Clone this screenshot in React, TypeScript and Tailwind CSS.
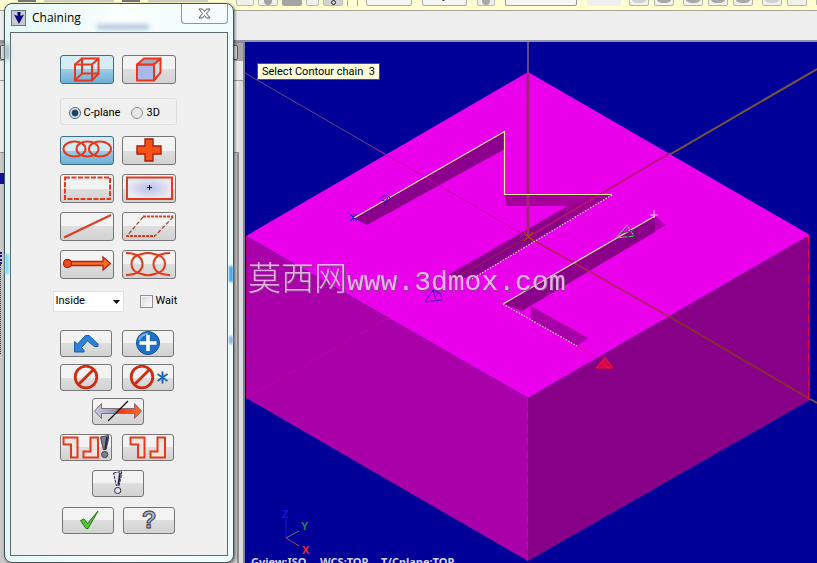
import type { ReactNode } from 'react';
import clsx from 'clsx';

const RED = '#e8381b';

type ToolButtonProps = {
  label: string;
  children: ReactNode;
  active?: boolean;
  small?: boolean;
};

const ToolButton = ({ label, children, active, small }: ToolButtonProps) => (
  <button
    type="button"
    aria-label={label}
    aria-pressed={active}
    className={clsx(
      'shrink-0 overflow-hidden rounded-[3px] border bg-linear-to-b',
      small ? 'h-[27px] w-[52px]' : 'h-[29px] w-[54px]',
      active
        ? 'border-[#3c6f8f] from-[#d5ebf6] from-50% via-[#9bcbe6] via-50% to-[#6cb0d6]'
        : 'border-[#777] from-[#f3f3f3] from-50% via-[#dedede] via-50% to-[#d2d2d2]'
    )}
  >
    <svg viewBox={small ? '1 1 50 25' : '1 1 52 27'} className="block h-full w-full" fill="none">
      {children}
    </svg>
  </button>
);

const Exclamation = ({ x, solid }: { x: number; solid?: boolean }) => (
  <g transform={`translate(${x} 0)`} stroke={solid ? '#3b3f4c' : '#26264d'} fill={solid ? '#7c8191' : '#e4e4f2'}>
    <path d="M0 3 L8 1.5 L8 5 L5.5 15.5 L2.8 15.5 Z" strokeDasharray={solid ? undefined : '3 1'} />
    <path d="M6.5 3 L4.8 15" stroke="#26264d" strokeWidth="1.8" />
    <circle cx="4.2" cy="20.5" r="3.1" />
  </g>
);

const Hooks = ({ x }: { x: number }) => (
  <g stroke={RED} strokeWidth="2" fill="#f6e4e0">
    <path d={`M${x} 3.5 h14 v20 h-6.5 v-13 h-7.5 z`} />
    <path d={`M${x + 27} 3.5 h7.5 v20 h-14.5 v-6 h7 z`} />
  </g>
);

const Forbidden = ({ cx }: { cx: number }) => (
  <g stroke="#cf2a12" strokeWidth="2.8">
    <circle cx={cx} cy="13" r="10.8" />
    <path d={`M${cx - 7.5} 20.5 L${cx + 7.5} 5.5`} />
  </g>
);

const WireCube = () => (
  <g stroke={RED} strokeWidth="2">
    <path d="M15 9.5 h17 v16 h-17 z M22 3.5 h16.5 v15 h-16.5 z" />
    <path d="M15 9.5 L22 3.5 M32 9.5 L38.5 3.5 M32 25.5 L38.5 18.5 M15 25.5 L22 18.5" />
  </g>
);

const SolidCube = () => (
  <g stroke={RED} strokeWidth="2" strokeLinejoin="round">
    <path d="M15 9.5 h17 v16 h-17 z" fill="#abb8e8" />
    <path d="M15 9.5 L22 3.5 h16.5 L32 9.5 z" fill="#a7a9bd" />
    <path d="M32 9.5 L38.5 3.5 v14 L32 25.5 z" fill="#e1d3dc" />
  </g>
);

const chainTools = [
  {
    label: 'Chain',
    active: true,
    icon: (
      <g stroke={RED} strokeWidth="2">
        <ellipse cx="14.5" cy="13" rx="11" ry="7.5" />
        <ellipse cx="27.5" cy="13" rx="11" ry="7.5" />
        <ellipse cx="40" cy="13" rx="11" ry="7.5" />
      </g>
    ),
  },
  {
    label: 'Point',
    icon: <path d="M23 3 h8 v7 h8 v8 h-8 v7 h-8 v-7 h-8 v-8 h8 z" fill="#f4511b" stroke="#a92108" strokeWidth="1.4" />,
  },
  {
    label: 'Window',
    icon: <rect x="5" y="3.5" width="45" height="21.5" stroke={RED} strokeWidth="2" strokeDasharray="5 1.5" />,
  },
  {
    label: 'Area',
    icon: (
      <>
        <defs>
          <radialGradient id="area">
            <stop offset="0" stopColor="#b8bee8" />
            <stop offset="1" stopColor="#ececf2" />
          </radialGradient>
        </defs>
        <rect x="5" y="3.5" width="45" height="21.5" fill="url(#area)" stroke={RED} strokeWidth="2" />
        <path d="M25 13.5 h5 M27.5 11 v5" stroke="#111" />
      </>
    ),
  },
  {
    label: 'Single',
    icon: <path d="M4 25.5 L51 3" stroke="#dd3d25" strokeWidth="2" />,
  },
  {
    label: 'Polygon',
    icon: (
      <g stroke={RED} strokeWidth="2">
        <path d="M21 4.5 H51 M4 24 H33" strokeDasharray="3 1" />
        <path d="M51 5 L33 24 M21 5 L5 24" stroke="#9c4a3c" strokeWidth="1.3" strokeDasharray="4 2" />
      </g>
    ),
  },
  {
    label: 'Vector',
    icon: (
      <g fill="#fb6a2b" stroke="#a92a0c" strokeWidth="1.3">
        <path d="M10 11.5 H43 V7 L50.5 13.5 L43 20 V15.5 H10 z" />
        <circle cx="7.5" cy="13.5" r="4" fill="#f04a1b" />
      </g>
    ),
  },
  {
    label: 'Partial',
    icon: (
      <g stroke={RED} strokeWidth="2">
        <path d="M4 3 C14 3 20.5 7 20.5 14 S14 25 4 25" />
        <path d="M48 3 C38 3 31.5 7 31.5 14 S38 25 48 25" />
        <path d="M32 4 C39 5 43 9 43 14 S39 23 32 24 C29 25.5 23 25.5 20 24 C13 23 9.5 19 9.5 14 S13 5 20 4 C23 2.5 29 2.5 32 4 z" />
      </g>
    ),
  },
];

const editTools = [
  {
    label: 'Last',
    icon: (
      <path
        d="M14.5 22 V11.5 L17.5 14 L25.5 5.5 H29 L38 14 V16.5 H34.5 L27.5 11 L21.5 17.5 L24 20.5 V22 z"
        fill="#2f82d8"
        stroke="#1a5da8"
      />
    ),
  },
  {
    label: 'End chain',
    icon: (
      <>
        <circle cx="26" cy="13" r="11.5" fill="#1e71c7" stroke="#154f91" />
        <path d="M17 10 C19 5 23 4 26 4" stroke="#7ab7ef" strokeWidth="2" />
        <path d="M26 5 V21 M17.5 13 H34.5" stroke="#fff" strokeWidth="3.5" />
      </>
    ),
  },
  { label: 'Unselect', icon: <Forbidden cx={26} /> },
  {
    label: 'Unselect all',
    icon: (
      <>
        <Forbidden cx={20} />
        <path d="M40.5 7.5 V19.5 M35.5 10 L45.5 17 M35.5 17 L45.5 10" stroke="#1f69b5" strokeWidth="2" />
      </>
    ),
  },
];

const wcsLabels = [
  { x: 251, text: 'Gview:ISO' },
  { x: 320, text: 'WCS:TOP' },
  { x: 381, text: 'T/Cplane:TOP' },
];

const toolbarPieces = [
  'w-[18px] border bg-[#f1f1ea]',
  'w-[20px] border bg-[#f1f1ea]',
  'w-[20px] bg-[#a5a5a5]',
  'w-[13px] border bg-[#f1f1ea]',
  'w-[20px] border border-[#666] bg-[#d4d4d4]',
];

const toolbarDots = [
  'bg-[#d0d0d0]',
  'bg-[#a9a9a9]',
  'bg-[#a9a9a9]',
  'bg-[#a9a9a9]',
  'bg-[#a9a9a9]',
  'bg-[#d0d0d0]',
  'bg-[#efefe6]',
];

const Toolbar = () => (
  <div className="flex h-[11px] shrink-0 items-end overflow-hidden border-b border-[#a9a89a] bg-[#ffffcf] pb-1">
    <div className="flex w-[236px] shrink-0 items-end gap-2 self-start pl-[18px]">
      <span className="h-[2px] w-[18px] bg-[#777]" />
      <span className="h-[2px] w-[70px] bg-[#cfcfc4]" />
      <span className="h-[2px] w-[18px] bg-[#777]" />
      <span className="h-[2px] w-[60px] bg-[#cfcfc4]" />
    </div>
    <div className="flex shrink-0 items-end gap-1">
      {toolbarPieces.map((piece, index) => (
        <span key={index} className={clsx('flex h-5 items-end justify-center rounded-xs border-[#bbb]', piece)}>
          {index === 4 && <span className="size-[5px] rounded-full border border-[#222]" />}
          {index === 1 && <span className="h-3 w-2 rounded-full bg-[#a3a3a3]" />}
        </span>
      ))}
    </div>
    <span className="ml-1 h-4 w-[11px] shrink-0 border-x border-[#aaa992]" />
    <div className="ml-2 flex shrink-0 items-end gap-[10px] font-['Roboto',sans-serif] text-[11px] text-black">
      <span className="h-5 w-[46px] rounded-xs border border-[#aaa] bg-[#f5f5f1]" />
      <span className="h-5 w-[45px] rounded-xs border border-[#aaa] bg-[#f5f5f1] text-center leading-[18px]">y</span>
      <span className="flex h-5 w-[18px] items-end justify-center rounded-xs border border-[#bbb] bg-[#f0f0ea]">
        <span className="h-2 w-2 rounded-full bg-[#a9a9a9]" />
      </span>
      <span className="h-5 w-[72px] rounded-xs border border-[#999] bg-[#f5f5f1] pl-1 leading-[18px]">m</span>
      <span className="h-5 w-[34px] bg-[#efeff2]" />
    </div>
    <div className="ml-2 flex shrink-0 items-end gap-[5px]">
      {toolbarDots.map((dot, index) => (
        <span
          key={index}
          className={clsx(
            'flex h-5 w-5 items-end justify-center rounded-xs border border-[#b5b5a5] bg-[#f3f3ec] pb-[2px]',
            (index === 2 || index === 5) && 'ml-1'
          )}
        >
          <span className={clsx('h-3 w-4 rounded-full', dot)} />
        </span>
      ))}
      <span className="ml-1 h-5 w-5 rounded-xs border border-[#b5b5a5] bg-[#f3f3ec]" />
    </div>
  </div>
);

// Side dock that mostly sits behind the chaining dialog
const Dock = () => (
  <div className="flex w-[245px] shrink-0 flex-col border-r-2 border-[#7d80a0] bg-[#eaeaea]">
    <div className="h-[19px] border-t border-[#888] bg-[#a8a8a8] pt-[2px] pr-[5px]">
      <div className="h-[15px] rounded-xs border border-[#555] bg-[#e0e0e0]" />
    </div>
    <div className="h-5 border-b border-[#999]" />
    <div className="flex flex-1 flex-col justify-start border-r-4 border-[#dcdcdc] pt-[71px]">
      <div className="flex flex-1 flex-col border-t border-r-2 border-[#8d8d8d] bg-[#c8c8c8]">
        <span className="mt-5 h-[11px] w-1 bg-[#10109c]" />
        <span className="mt-[68px] h-3 w-1 border-l-2 border-dotted border-[#10109c]" />
        <span className="h-[90px] w-1 border-l border-dotted border-[#333]" />
      </div>
    </div>
  </div>
);

const Scene = () => (
  <svg
    viewBox="245 42 572 521"
    preserveAspectRatio="xMinYMin slice"
    className="block h-full w-full"
    fill="none"
    role="img"
    aria-label="Solid block with contour slots"
  >
    {/* background axes */}
    <path d="M245 73 L528 237" stroke="#6b4577" />
    <path d="M817 69 L528 237" stroke="#77543c" strokeWidth="2" />
    <path d="M528 42 V237" stroke="#65468e" strokeWidth="2" />

    {/* block faces */}
    <path d="M528 72 L810 235 L528 398 L246 236 z" fill="#ea00ea" />
    <path d="M246 236 L528 398 V561 L246 398 z" fill="#aa00aa" />
    <path d="M528 398 L810 235 V400 L528 561 z" fill="#880088" />

    {/* slots */}
    <path d="M354 218 L505 131 V149 L367 225 z" fill="#8b008d" />
    <path d="M505 194 H612 L575 216 L566 206 H505 z" fill="#a3009c" />
    <path d="M448 275 L566 207 L600 197 L612 195 L472 279 z" fill="#8b008b" />
    <path d="M566 206 L612 195 L566 221 z" fill="#9d008f" />
    <path d="M655 216 L666 225 L654 232 z" fill="#ae00ae" />
    <path d="M503 304 L655 216 V232 L522 311 z" fill="#8b008b" />
    <path d="M531 306 L588 338 L577 346 L531 320 z" fill="#a800a8" />

    {/* axes drawn over the block */}
    <path d="M528 73 V237" stroke="#a62080" strokeWidth="3" />
    <path d="M373 147 L528 237" stroke="#c500b0" />
    <path d="M670 153 L528 237" stroke="#b41572" strokeWidth="1.5" />
    <path d="M528 237 L448 282" stroke="#851a5c" strokeWidth="1.5" />
    <path d="M390 317 L246 398" stroke="#bd00a5" />
    <path d="M528 237 L670 317" stroke="#b02458" strokeWidth="1.5" />
    <path d="M670 317 L810 399" stroke="#84302f" strokeWidth="2" />
    <path d="M810 399 L817 403" stroke="#77543c" strokeWidth="2" />
    <path d="M524 232 L533 241 M533 232 L524 241" stroke="#9d5c00" />

    {/* chained contours */}
    <path d="M354 218 L504.5 131.5 V194.5 H612" stroke="#ffe89c" strokeWidth="1.2" />
    <path d="M612 195 L472 279" stroke="#ffe0dc" strokeWidth="1.2" strokeDasharray="1.5 1.5" />
    <path d="M503 304 L655 216" stroke="#ffe89c" strokeWidth="1.2" />
    <path d="M503 304 L577 346" stroke="#ffe0f0" strokeWidth="1.2" strokeDasharray="1.5 1.5" />

    {/* hidden edges */}
    <path d="M527.5 398 V561 M808.5 236 V400" stroke="#e00a48" strokeDasharray="9 4" />
    <path d="M246.5 236 V398" stroke="#c00078" strokeDasharray="8 4" />

    {/* chain direction markers */}
    <g stroke="#3512bd">
      <path d="M350 214 L357 221 M357 214 L350 221 M353.5 213 V222" />
      <path d="M380 198 L387 195 L391 199 M384 206 L388 197 M381 200 L388 202 L385 205" />
      <path d="M425 302 L433 290 L441 294 L442 300 z M433 290 L436 300" />
    </g>
    <g stroke="#64c978">
      <path d="M616 238 L627 225 L634 236 z" />
      <path d="M622 233 L634 230 V239 L627 236" stroke="#304c48" />
    </g>
    <path d="M654 210 V218 M650 215 H658" stroke="#ffc5e5" />
    <path d="M577 346 L597 359" stroke="#e90a60" strokeDasharray="2 2" />
    <path d="M596 368 L605 357 L613 368 z M600 362 L609 368" fill="#d00852" stroke="#fb0d27" />

    {/* axis triad */}
    <path d="M286 538 V519" stroke="#1616db" />
    <path d="M286 538 L299 531" stroke="#607c78" />
    <path d="M286 538 L299 546" stroke="#b53a50" />
    <g className="font-['Liberation_Sans',sans-serif] text-[11px] font-bold">
      <text x="282" y="518" fill="#1616db">Z</text>
      <text x="301" y="530" fill="#189052">Y</text>
      <text x="302" y="554" fill="#f22638">X</text>
    </g>
    <g className="font-['Noto_Sans',sans-serif] text-[11px] font-bold" fill="#d5d5ff">
      {wcsLabels.map((item) => (
        <text key={item.x} x={item.x} y="566">
          {item.text}
        </text>
      ))}
    </g>
  </svg>
);

const ChainingDialog = () => (
  <section
    aria-labelledby="chaining-title"
    className="absolute top-[3px] left-[4px] flex h-[560px] w-[230px] flex-col rounded-lg border border-[#425255] bg-linear-to-r from-[#e4f7f8] via-[#fafefe] to-[#eefdfd] px-[5px] pb-[6px] font-['Roboto',sans-serif] text-[11px] text-black shadow-[1px_1px_3px_#0008]"
  >
    <span className="absolute top-[262px] right-0 h-4 w-1 bg-[#3fa0ec] blur-[1px]" />
    <span className="absolute top-[332px] right-0 h-2 w-1 bg-[#8fb4dc] blur-[1px]" />
    <span className="absolute top-[40px] left-0 h-4 w-1 bg-[#93a8b8] blur-[2px]" />
    <span className="absolute top-[250px] left-0 h-5 w-1 bg-[#7fdcf4] blur-[1px]" />

    <header className="flex h-[28px] shrink-0 items-start justify-between">
      <div className="flex items-center gap-[6px] pt-[6px] pl-px">
        <span className="flex h-4 w-[15px] items-center justify-center border border-[#777] bg-[#c8c8d0]">
          <svg viewBox="0 0 12 14" className="h-[14px] w-3" fill="#06067b">
            <path d="M4.5 1 H7.5 V5 L11 3.5 L6 13 L1 3.5 L4.5 5 z" />
          </svg>
        </span>
        <h1 id="chaining-title" className="font-['Open_Sans',sans-serif] text-[12px] leading-4">
          Chaining
        </h1>
      </div>
      <span className="mt-[20px] mr-4 h-[6px] w-[52px] bg-[#8eabcb]/60 blur-[2px]" />
      <button
        type="button"
        aria-label="Close"
        className="flex h-5 w-[47px] items-center justify-center rounded-b-[4px] border border-t-0 border-[#8b989c] bg-[#f7fcfd]"
      >
        <svg viewBox="0 0 13 11" className="h-[11px] w-[13px]" fill="#fff" stroke="#555c64">
          <path d="M1 1 H4.5 L6.5 3.5 L8.5 1 H12 L8.5 5.5 L12 10 H8.5 L6.5 7.5 L4.5 10 H1 L4.5 5.5 z" />
        </svg>
      </button>
    </header>

    <div className="flex flex-1 flex-col items-center border border-[#5d696c] bg-[#f0f0f0] pt-[22px] pr-[2px]">
      <div className="flex gap-2">
        <ToolButton label="Wireframe" active>
          <WireCube />
        </ToolButton>
        <ToolButton label="Solids">
          <SolidCube />
        </ToolButton>
      </div>

      <div
        role="radiogroup"
        aria-label="Plane mode"
        className="mt-[14px] flex h-[27px] w-[117px] items-center gap-[11px] rounded-[3px] border border-[#dedede] pt-[3px] pl-2"
      >
        {['C-plane', '3D'].map((mode, index) => (
          <label key={mode} className="flex items-center gap-[3px]">
            <input
              type="radio"
              name="mode"
              defaultChecked={index === 0}
              className="size-3 appearance-none rounded-full border border-[#8b8f94] bg-[#e8e8e8] checked:border-[#4f6672] checked:bg-radial checked:from-[#174562] checked:from-40% checked:to-[#d6e6ee] checked:to-55%"
            />
            {mode}
          </label>
        ))}
      </div>

      <div className="mt-[11px] grid grid-cols-2 gap-x-2 gap-y-[9px]">
        {chainTools.map((tool) => (
          <ToolButton key={tool.label} label={tool.label} active={tool.active}>
            {tool.icon}
          </ToolButton>
        ))}
      </div>

      <div className="mt-3 flex w-[131px] items-center gap-4">
        <div className="relative">
          <select
            aria-label="Window selection"
            className="block h-[21px] w-[71px] appearance-none border border-[#e2e2e2] bg-white pl-[2px]"
          >
            <option>Inside</option>
          </select>
          <svg viewBox="0 0 7 4" className="pointer-events-none absolute top-[9px] right-1 h-1 w-[7px]">
            <path d="M0 0 H7 L3.5 4 z" />
          </svg>
        </div>
        <label className="flex items-center gap-[3px]">
          <input
            type="checkbox"
            className="size-[13px] appearance-none border border-[#8e8f8f] bg-linear-to-br from-[#d5d7da] to-white shadow-[inset_0_0_0_1px_#f4f4f4]"
          />
          Wait
        </label>
      </div>

      <div className="mt-[18px] grid grid-cols-2 gap-x-[10px] gap-y-[7px] pr-[2px]">
        {editTools.map((tool) => (
          <ToolButton key={tool.label} label={tool.label} small>
            {tool.icon}
          </ToolButton>
        ))}
      </div>

      <div className="mt-[7px] flex">
        <ToolButton label="Reverse" small>
          <defs>
            <linearGradient id="reverse">
              <stop offset="0" stopColor="#c9cce2" />
              <stop offset="0.45" stopColor="#9297bb" />
              <stop offset="0.5" stopColor="#ee3a10" />
              <stop offset="1" stopColor="#fb6a2b" />
            </linearGradient>
          </defs>
          <path
            d="M2.5 13 L9.5 5.5 V10.5 H42.5 V5.5 L49.5 13 L42.5 20.5 V15.5 H9.5 V20.5 z"
            fill="url(#reverse)"
            stroke="#8a6a74"
          />
          <path d="M16 23 L36 3" stroke="#111" strokeWidth="1.3" />
        </ToolButton>
      </div>

      <div className="mt-[9px] flex gap-[10px] pr-[2px]">
        <ToolButton label="Chain feature options" small>
          <Hooks x={3.5} />
          <Exclamation x={40.5} solid />
        </ToolButton>
        <ToolButton label="Chain feature" small>
          <Hooks x={8.5} />
        </ToolButton>
      </div>

      <div className="mt-[9px] flex">
        <ToolButton label="Options" small>
          <Exclamation x={21.5} />
        </ToolButton>
      </div>

      <div className="mt-[10px] flex gap-[9px] pl-px">
        <ToolButton label="OK" small>
          <path d="M18.5 13.5 L22 12 L25.5 16.5 L36 4 L26 21.5 H24 z" fill="#52c82c" stroke="#22751a" />
        </ToolButton>
        <ToolButton label="Help" small>
          <text
            x="26"
            y="21"
            textAnchor="middle"
            fill="#b4b9cc"
            stroke="#363a4c"
            className="font-['Liberation_Sans',sans-serif] text-[24px] font-bold"
          >
            ?
          </text>
        </ToolButton>
      </div>
    </div>
  </section>
);

export default function App() {
  return (
    <main className="relative flex h-screen flex-col overflow-hidden bg-[#eeeeee]">
      <Toolbar />
      <div className="h-[31px] shrink-0 border-b-2 border-[#9292a8] bg-[#eeeeee]" />
      <div className="flex min-h-0 flex-1">
        <Dock />
        <div className="relative min-w-0 flex-1 overflow-hidden bg-[#000099]">
          <Scene />
          <p className="absolute top-[21px] left-[12px] border border-[#55553a] bg-[#ffffdc] px-[4px] font-['Roboto',sans-serif] text-[11px] leading-[15px] whitespace-pre text-black">
            Select Contour chain  3
          </p>
          <p className="absolute top-[212px] left-[3px] flex items-baseline leading-[44px] whitespace-nowrap text-[#f3c4f3] opacity-90 [text-shadow:1px_1px_0_#77507a]">
            <span className="font-['Noto_Sans_CJK_SC',sans-serif] text-[33px] font-light">莫西网</span>
            <span className="font-['Liberation_Mono',monospace] text-[28px]">www.3dmox.com</span>
          </p>
        </div>
      </div>
      <ChainingDialog />
    </main>
  );
}
